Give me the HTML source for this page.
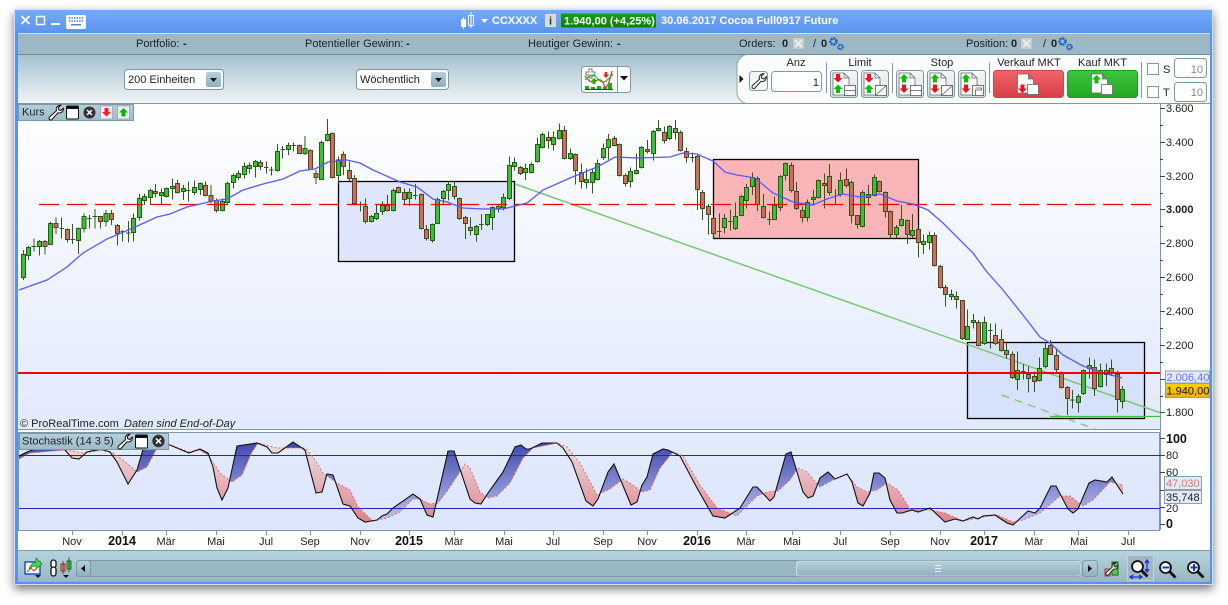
<!DOCTYPE html>
<html><head><meta charset="utf-8"><title>CCXXXX Cocoa</title>
<style>
html,body{margin:0;padding:0;background:#fff;width:1228px;height:605px;overflow:hidden}
#w{position:absolute;left:14px;top:9px;width:1199px;height:576px;box-shadow:0 4px 9px rgba(0,0,0,.55)}
svg{position:absolute;left:0;top:0}
text{font-family:"Liberation Sans",sans-serif;font-size:11px;fill:#222}
.t{font-weight:bold;fill:#fff}
.b{font-weight:bold}
.a{font-size:11px;fill:#222}
.x{font-size:11px;text-anchor:middle;fill:#222}
.xb{font-size:12.500px;font-weight:bold;text-anchor:middle;fill:#111}
.m{text-anchor:middle}
.w{fill:none;stroke:#2c5a12;stroke-width:3}
.g{fill:#3cc03c;stroke:#2c5a12;stroke-width:3}
.r{fill:#dc6464;stroke:#2c5a12;stroke-width:3}
</style></head><body>
<div id="w"></div>
<svg width="1228" height="605" viewBox="0 0 1228 605" xmlns="http://www.w3.org/2000/svg">
<defs>
<linearGradient id="tb" x1="0" y1="0" x2="0" y2="1"><stop offset="0" stop-color="#74abff"/><stop offset="1" stop-color="#5c94ec"/></linearGradient>
<linearGradient id="tool" x1="0" y1="0" x2="0" y2="1"><stop offset="0" stop-color="#a6c2ce"/><stop offset="1" stop-color="#f0f4f6"/></linearGradient>
<linearGradient id="chart" x1="0" y1="0" x2="0" y2="1"><stop offset="0" stop-color="#fff"/><stop offset="1" stop-color="#e1e9fd"/></linearGradient>
<linearGradient id="st" x1="0" y1="0" x2="0" y2="1"><stop offset="0" stop-color="#e3ebfd"/><stop offset="1" stop-color="#dce5fc"/></linearGradient>
<linearGradient id="bot" x1="0" y1="0" x2="0" y2="1"><stop offset="0" stop-color="#b6d4de"/><stop offset="1" stop-color="#98b6c2"/></linearGradient>
<linearGradient id="tag" x1="0" y1="0" x2="0" y2="1"><stop offset="0" stop-color="#b4d0da"/><stop offset="1" stop-color="#9cbcc8"/></linearGradient>
<linearGradient id="btn" x1="0" y1="0" x2="0" y2="1"><stop offset="0" stop-color="#f6f8f9"/><stop offset="1" stop-color="#d6dfe4"/></linearGradient>
<linearGradient id="arr" x1="0" y1="0" x2="0" y2="1"><stop offset="0" stop-color="#b6d0da"/><stop offset="1" stop-color="#90b0be"/></linearGradient>
<linearGradient id="rb" x1="0" y1="0" x2="0" y2="1"><stop offset="0" stop-color="#f06468"/><stop offset="1" stop-color="#d84044"/></linearGradient>
<linearGradient id="gb" x1="0" y1="0" x2="0" y2="1"><stop offset="0" stop-color="#3cc63c"/><stop offset="1" stop-color="#22a622"/></linearGradient>
<linearGradient id="pr" x1="0" y1="0" x2="0" y2="1"><stop offset="0" stop-color="#18a018"/><stop offset="1" stop-color="#0a7e0a"/></linearGradient>
<linearGradient id="yl" x1="0" y1="0" x2="0" y2="1"><stop offset="0" stop-color="#ffd000"/><stop offset="1" stop-color="#f0b000"/></linearGradient>
<linearGradient id="blu" gradientUnits="userSpaceOnUse" x1="0" y1="440" x2="0" y2="526"><stop offset="0" stop-color="#3e44aa"/><stop offset="1" stop-color="#c0ccf4"/></linearGradient>
<linearGradient id="red" gradientUnits="userSpaceOnUse" x1="0" y1="445" x2="0" y2="526"><stop offset="0" stop-color="#ecdde4"/><stop offset="1" stop-color="#de8088"/></linearGradient>
<clipPath id="aboveD"><path d="M19 432V459L30 453 65 450 83 453 103 450 113 453 123 460 137 472 147 467 157 448 170 445 189 452 200 450 208 455 220 473 232 482 242 475 252 452 258 443 277 448 293 448 305 448 313 457 323 473 337 483 350 490 358 507 373 521 387 518 400 512 413 499 420 499 430 504 438 503 448 490 465 464 470 468 480 492 488 498 497 496 510 483 523 458 533 448 557 443 567 447 580 463 597 495 610 489 623 479 633 485 642 492 650 490 660 468 673 452 683 456 700 485 717 508 737 516 757 496 767 492 778 491 790 480 798 468 807 472 820 487 833 480 847 474 857 487 867 492 877 490 887 483 898 490 910 509 930 510 945 513 963 521 983 517 997 515 1013 522 1023 520 1040 513 1060 496 1070 496 1083 506 1093 500 1110 482 1123 485V432Z"/></clipPath>
<clipPath id="aboveK"><path d="M19 432V456L27 452 35 449 45 445 55 445 65 450 72 458 79 459 87 452 100 449 110 452 117 462 128 484 137 470 142 453 143 448 160 443 170 445 177 448 189 453 200 449 208 453 213 467 217 488 222 500 228 488 237 446 257 443 267 447 272 453 278 453 293 442 305 450 310 470 316 493 322 492 327 474 333 475 343 504 350 506 358 518 365 522 377 520 382 516 387 514 393 508 413 494 420 499 427 515 433 517 448 451 454 451 470 499 475 503 481 504 488 493 503 472 515 447 521 445 526 449 530 449 542 443 557 443 563 448 572 462 586 501 593 506 598 499 608 472 614 464 631 505 637 502 642 485 647 477 653 454 663 449 668 450 680 456 697 488 713 516 725 518 740 508 753 487 757 487 770 501 774 497 786 454 791 452 803 492 808 498 813 496 820 478 828 472 835 479 847 474 852 482 858 503 863 506 870 493 874 473 879 473 885 478 890 500 897 513 902 513 912 510 918 512 930 508 945 522 955 519 963 521 973 517 978 519 983 516 995 515 1007 523 1013 525 1028 511 1035 513 1040 508 1051 486 1056 486 1068 509 1073 513 1078 509 1089 483 1095 480 1107 482 1112 477 1117 485 1123 494V432Z"/></clipPath>
<path id="wr" d="M12.500 .8a4 4 0 0 0-4 5.400L1.500 12.500a1.700 1.700 0 0 0 2.500 2.500L10 8.200a4 4 0 0 0 5.300-4.600L13 6 10.800 5.300 10.300 3 12.800 .8z"/>
<path id="au" d="M0 0l4.500 4.500H2v4h-4v-4h-2.500z"/>
<path id="ad" d="M0 8.500l4.500-4.500H2V0h-4v4h-2.500z"/>
<path id="doc" d="M0 0h11l5 5v17H0zM11 0v5h5"/>
<path id="doc2" d="M0 0h11l5 5v14H0zM11 0v5h5"/>
<g id="gear"><circle cx="4.500" cy="4.500" r="3" fill="none" stroke="#1560c8" stroke-width="2.400" stroke-dasharray="2 .7"/><circle cx="11.500" cy="10" r="2.300" fill="none" stroke="#1560c8" stroke-width="2" stroke-dasharray="1.600 .6"/></g>
<g id="off"><rect width="11" height="11" fill="#c8cccc"/><path d="M2 2l7 7M9 2l-7 7" stroke="#eee" stroke-width="2"/></g>
<g id="mag"><circle cx="6.500" cy="6.500" r="5.500" fill="#fff" stroke="#111" stroke-width="1.800"/><path d="M10.500 10.500l6 6" stroke="#111" stroke-width="2.800"/></g>
</defs>

<!-- window frame -->
<rect x="14" y="9" width="1199" height="576" fill="#cfe0f8"/>
<rect x="15" y="10" width="1197" height="574" fill="#5a92ea"/>
<rect x="15" y="10" width="1197" height="23" fill="url(#tb)"/>
<rect x="18" y="33" width="1192" height="549" fill="#fff"/>

<!-- title -->
<path d="M21.500 16l8 8M29.500 16l-8 8" stroke="#fff" stroke-width="1.800"/>
<rect x="36.500" y="16.500" width="8" height="8" fill="none" stroke="#fff" stroke-width="1.400"/>
<rect x="51" y="23" width="9" height="2" fill="#fff"/>
<rect x="66" y="15" width="20" height="14" rx="2" fill="#fff"/>
<path d="M69 18h14M69 21h14" stroke="#4c82dc" stroke-width="1.500" stroke-dasharray="1.500 1"/><rect x="71" y="24" width="10" height="1.500" fill="#4c82dc"/>
<rect x="461" y="19" width="5" height="8" fill="#fff"/><path d="M463.500 17v12M471 12v16" stroke="#fff"/><rect x="468.500" y="15.500" width="5" height="10" fill="none" stroke="#fff"/>
<path d="M481 19h7l-3.500 4z" fill="#fff"/>
<text class="t" x="492" y="24">CCXXXX</text>
<rect x="545" y="14" width="11" height="13" fill="#d8dcdc"/><text x="550.500" y="24.500" class="b m" style="fill:#333">i</text>
<rect x="561" y="13.500" width="95" height="14" fill="url(#pr)"/>
<text class="t" x="564" y="24.500">1.940,00 (+4,25%)</text>
<text class="t" x="661" y="24" style="letter-spacing:.04px">30.06.2017 Cocoa Full0917 Future</text>

<!-- info row -->
<rect x="18" y="33" width="1192" height="22" fill="#9cb8c4"/>
<rect x="18" y="33" width="1192" height="1" fill="#d0e2f2"/>
<rect x="18" y="54" width="1192" height="1" fill="#6f8c9a"/>
<text x="136" y="47">Portfolio:</text><text x="183" y="47" class="b">-</text>
<text x="305" y="47">Potentieller Gewinn:</text><text x="406" y="47" class="b">-</text>
<text x="528" y="47">Heutiger Gewinn:</text><text x="617" y="47" class="b">-</text>
<text x="739" y="47">Orders:</text><text x="782" y="47" class="b">0</text><use href="#off" x="793" y="38"/><text x="813" y="47">/</text><text x="821" y="47" class="b">0</text><use href="#gear" x="829" y="37"/>
<text x="966" y="47">Position:</text><text x="1011" y="47" class="b">0</text><use href="#off" x="1021" y="38"/><text x="1043" y="47">/</text><text x="1051" y="47" class="b">0</text><use href="#gear" x="1058" y="37"/>

<!-- toolbar -->
<rect x="18" y="55" width="1192" height="48" fill="url(#tool)"/>
<path d="M745 55H1210V103H745Q737 100 737 92V66Q737 58 745 55Z" fill="#fbfcfc"/>
<path d="M745 55Q737 58 737 66V92Q737 100 745 103" fill="none" stroke="#8ba4b0"/>
<rect x="18" y="103" width="1192" height="1" fill="#7f98a5"/>
<rect x="124.500" y="69.500" width="99" height="20" rx="3" fill="#fff" stroke="#7f98a5"/>
<text x="128" y="83">200 Einheiten</text>
<rect x="206" y="72" width="15" height="15" rx="2" fill="url(#arr)"/><path d="M210 78h7l-3.500 4z" fill="#111"/>
<rect x="356.500" y="69.500" width="92" height="20" rx="3" fill="#fff" stroke="#7f98a5"/>
<text x="360" y="83">Wöchentlich</text>
<rect x="431" y="72" width="15" height="15" rx="2" fill="url(#arr)"/><path d="M435 78h7l-3.500 4z" fill="#111"/>
<rect x="581.500" y="66.500" width="49" height="26" rx="3" fill="#fff" stroke="#7f98a5"/>
<line x1="617.500" y1="67" x2="617.500" y2="92" stroke="#7f98a5"/>
<path d="M620 76h8l-4 4.500z" fill="#111"/>
<path d="M589 69h3v3h3v3h-3v3h-3v-3h-3v-3h3z" fill="#fff" stroke="#777"/>
<path d="M585 76q6 9 11 5t8 4 8-14" fill="none" stroke="#dd3030" stroke-width="1.200"/>
<path d="M585 80q7-8 12-2t9 3 7-7" fill="none" stroke="#28b028" stroke-width="1.200"/>
<path d="M585 86h4v3h-4zM591 87h4v2h-4zM597 86h4v3h-4zM603 87h4v2h-4zM608 83h4v6h-4z" fill="#18b018"/>
<use href="#au" transform="translate(594 78) scale(.7)" fill="#0b0"/><use href="#ad" transform="translate(606 72) scale(.7)" fill="#e22"/>
<rect x="585" y="89" width="28" height="1" fill="#2233aa"/>

<!-- order panel -->
<path d="M739.500 75l4 4-4 4z" fill="#111"/>
<rect x="749.500" y="71.500" width="18" height="19" rx="3" fill="#f4f6f7" stroke="#7f98a5"/>
<use href="#wr" x="751" y="73" fill="#fff" stroke="#222"/>
<text class="m" x="796" y="66">Anz</text>
<rect x="771.500" y="71.500" width="50" height="20" rx="3" fill="#fff" stroke="#7f98a5"/>
<text x="819" y="86" style="text-anchor:end">1</text>
<path d="M826.500 63v30M892.500 63v30M989.500 63v30M1141.500 62v36" stroke="#7f98a5"/>
<text class="m" x="860" y="66">Limit</text>
<g stroke="#7f98a5">
<rect x="830.500" y="70.500" width="27" height="27" rx="3" fill="url(#btn)"/>
<rect x="861.500" y="70.500" width="27" height="27" rx="3" fill="url(#btn)"/>
<rect x="896.500" y="70.500" width="27" height="27" rx="3" fill="url(#btn)"/>
<rect x="927.500" y="70.500" width="27" height="27" rx="3" fill="url(#btn)"/>
<rect x="958.500" y="70.500" width="27" height="27" rx="3" fill="url(#btn)"/>
</g>
<g stroke="#666" stroke-width=".8" fill="#fff">
<use href="#doc" x="833" y="73"/><use href="#doc" x="864" y="73"/><use href="#doc" x="899" y="73"/><use href="#doc" x="930" y="73"/><use href="#doc" x="961" y="73"/>
<rect x="844.500" y="85.500" width="11" height="10" stroke="#555"/><rect x="875.500" y="85.500" width="11" height="10" stroke="#555"/><rect x="910.500" y="85.500" width="11" height="10" stroke="#555"/><rect x="941.500" y="85.500" width="11" height="10" stroke="#555"/><rect x="972.500" y="85.500" width="11" height="10" stroke="#555"/>
<path d="M844.500 90.500h11M910.500 90.500h11M875.500 95.500l11-10M941.500 95.500l11-10M975.500 95v-5h6v-2h-6" fill="none" stroke="#555"/>
</g>
<g fill="#e8141c"><use href="#ad" x="838" y="74"/><use href="#ad" x="869" y="74"/><use href="#ad" x="904" y="84.500"/><use href="#ad" x="935" y="84.500"/><use href="#ad" x="966" y="84.500"/></g>
<g fill="#08c008"><use href="#au" x="838" y="84.500"/><use href="#au" x="869" y="84.500"/><use href="#au" x="904" y="74"/><use href="#au" x="935" y="74"/><use href="#au" x="966" y="74"/></g>
<text class="m" x="942" y="66">Stop</text>
<text class="m" x="1029" y="66">Verkauf MKT</text>
<text class="m" x="1102.500" y="66">Kauf MKT</text>
<rect x="993.500" y="70.500" width="70" height="27" rx="3" fill="url(#rb)" stroke="#c84a4a"/>
<rect x="1067.500" y="70.500" width="70" height="27" rx="3" fill="url(#gb)" stroke="#1f9a24"/>
<g fill="#fff" stroke="#667" stroke-width=".8"><use href="#doc2" x="1017.500" y="74"/><rect x="1027.500" y="84.500" width="11" height="10"/><use href="#doc2" x="1091.500" y="74"/><rect x="1101.500" y="84.500" width="11" height="10"/></g>
<use href="#ad" x="1022.500" y="84.500" fill="#e8141c"/><use href="#au" x="1096.500" y="75" fill="#08c008"/>
<g fill="#fff" stroke="#7f98a5">
<rect x="1147.500" y="63.500" width="11" height="11"/><rect x="1147.500" y="86.500" width="11" height="11"/>
<rect x="1174.500" y="58.500" width="32" height="19" rx="3"/><rect x="1174.500" y="82.500" width="32" height="19" rx="3"/>
</g>
<text x="1163" y="73">S</text><text x="1163" y="96">T</text>
<text x="1203" y="73" style="text-anchor:end;fill:#888">10</text><text x="1203" y="96" style="text-anchor:end;fill:#888">10</text>

<!-- main chart -->
<rect x="18" y="104" width="1142" height="326" fill="url(#chart)"/>
<rect x="338.500" y="181.500" width="176" height="80" fill="#dfe6fb" stroke="#000" stroke-width="1.300"/>
<rect x="713.500" y="159.500" width="205" height="79" fill="#fbb4b8" stroke="#000" stroke-width="1.300"/>
<rect x="967.500" y="342.500" width="177" height="76" fill="#d6e1fb" stroke="#000" stroke-width="1.300"/>
<path d="M515 184L1160 412.700" stroke="#78c878" stroke-width="1.500" fill="none"/>
<path d="M1001.700 395L1095 429" stroke="#78c878" stroke-width="1.300" stroke-dasharray="8 6" fill="none"/>
<path d="M1050 416.500H1160" stroke="#40bc40" stroke-width="1.200" fill="none"/>

<g shape-rendering="crispEdges">
<g transform="translate(0 110) scale(.33333)">
<path class="w" d="M70 420V510M85 408V450M102 385V425M95 410h14M118 390V437M135 390V433M151 335V405M168 322V372M185 322V385M178 355h14M202 355V398M218 342V402M211 389h14M235 352V432M252 310V368M268 315V355M261 325h14M285 297V355M278 319h14M301 318V355M318 300V350M334 300V345M352 342V407M368 360V395M361 365h14M385 333V398M378 369h14M400 310V395M418 252V332M433 250V285M451 235V285M466 222V262M484 235V285M499 232V262M517 205V268M532 210V250M550 225V270M565 215V275M558 241h14M583 212V255M601 218V255M616 214V260M633 225V280M649 265V308M667 265V305M682 215V285M700 190V235M715 182V210M733 157V205M748 158V190M766 150V203M781 150V180M799 155V190M792 173h14M814 170V197M807 180h14M832 102V185M848 108V145M841 119h14M865 98V135M881 98V125M874 106h14M898 104V132M915 78V135M931 118V180M948 180V222M964 92V210M982 27V95M997 68V205M1015 140V220M1030 125V195M1048 155V215M1063 195V282M1081 275V305M1074 283h14M1096 265V340M1114 315V337M1129 285V330M1147 275V315M1162 255V305M1180 235V305M1195 230V250M1213 235V285M1228 235V288"/>
<path class="g" d="M64 433h12v70h-12zM79 412h12v25h-12zM112 394h12v15h-12zM145 340h12v63h-12zM229 355h12v36h-12zM246 319h12v36h-12zM312 310h12v24h-12zM394 325h12v42h-12zM412 265h12v57h-12zM427 260h12v11h-12zM445 241h12v21h-12zM478 247h12v9h-12zM493 235h12v24h-12zM511 230h12v5h-12zM544 235h12v10h-12zM577 232h12v15h-12zM595 220h12v18h-12zM661 275h12v26h-12zM676 220h12v57h-12zM694 196h12v21h-12zM709 190h12v13h-12zM727 169h12v24h-12zM742 166h12v9h-12zM760 154h12v15h-12zM826 124h12v57h-12zM859 106h12v12h-12zM909 115h12v15h-12zM958 97h12v111h-12zM976 73h12v18h-12zM1009 150h12v47h-12zM1108 320h12v14h-12zM1123 311h12v14h-12zM1141 286h12v18h-12zM1174 241h12v61h-12zM1222 247h12v18h-12z"/>
<path class="r" d="M129 394h12v15h-12zM162 340h12v12h-12zM196 358h12v30h-12zM295 320h12v14h-12zM328 310h12v18h-12zM346 346h12v24h-12zM460 245h12v5h-12zM526 220h12v27h-12zM610 226h12v31h-12zM627 256h12v17h-12zM643 272h12v29h-12zM775 157h12v12h-12zM892 106h12v24h-12zM925 122h12v56h-12zM942 191h12v11h-12zM991 70h12v132h-12zM1024 133h12v36h-12zM1042 181h12v24h-12zM1057 205h12v76h-12zM1090 289h12v45h-12zM1156 286h12v16h-12zM1189 232h12v15h-12zM1207 247h12v21h-12z"/>
</g>
<g transform="translate(320 110) scale(.33333)">
<path class="w" d="M286 222V268M279 256h14M304 250V358M319 345V392M337 340V398M352 262V342M370 240V285M385 215V272M403 215V268M418 262V330M436 318V387M451 322V377M469 345V395M484 312V360M477 344h14M502 312V348M517 290V360M535 282V308M550 250V302M568 140V270M583 142V182M601 168V195M616 160V210M634 157V190M652 83V158M667 68V115M685 65V115M700 65V122M718 40V88M733 48V148M751 115V150M766 130V223M784 160V235M799 175V235M817 178V250M832 148V212M850 100V150M865 72V148M883 78V110M898 100V200M916 190V230M931 172V232M949 130V193M964 108V175M982 90V130M1000 60V152M1015 30V65M1033 50V100M1048 45V90M1066 30V88M1081 62V125"/>
<path class="g" d="M331 343h12v49h-12zM346 268h12v72h-12zM364 244h12v22h-12zM379 223h12v18h-12zM463 349h12v24h-12zM496 313h12v31h-12zM511 292h12v30h-12zM529 289h12v7h-12zM544 262h12v30h-12zM562 166h12v100h-12zM577 157h12v12h-12zM610 175h12v12h-12zM628 163h12v24h-12zM646 103h12v52h-12zM661 73h12v39h-12zM694 82h12v21h-12zM712 61h12v24h-12zM745 130h12v15h-12zM793 208h12v9h-12zM811 187h12v30h-12zM826 160h12v48h-12zM844 115h12v27h-12zM859 88h12v24h-12zM925 184h12v30h-12zM943 181h12v9h-12zM958 112h12v60h-12zM994 64h12v66h-12zM1042 49h12v36h-12z"/>
<path class="r" d="M298 253h12v102h-12zM313 358h12v28h-12zM397 229h12v31h-12zM412 265h12v60h-12zM430 322h12v19h-12zM445 352h12v9h-12zM595 172h12v18h-12zM679 82h12v9h-12zM727 61h12v84h-12zM760 133h12v48h-12zM778 187h12v27h-12zM877 85h12v21h-12zM892 103h12v93h-12zM910 196h12v24h-12zM976 118h12v6h-12zM1009 55h12v6h-12zM1027 67h12v24h-12zM1060 55h12v12h-12zM1075 67h12v54h-12z"/>
</g>
<g transform="translate(680 140) scale(.33333)">
<path class="w" d="M19 22V67M37 37V67M30 52h14M52 45V210M67 150V240M85 192V283M100 232V295M118 220V295M111 275h14M133 222V280M151 208V272M144 245h14M166 187V270M184 165V228M199 132V205M217 97V165M232 110V213M250 162V235M268 215V255M261 239h14M283 170V240M301 105V213M316 67V122M334 67V158M349 126V210M367 200V248M382 178V245M400 150V195M415 118V175M433 100V205M448 72V167M466 147V192M481 98V170M499 85V142M514 122V250M532 225V265M547 152V262M565 135V197M583 103V170M598 122V157M616 155V232M631 212V295M649 255V295M664 195V260M682 238V312M697 222V295M715 265V353M730 283V342M748 275V328M763 278V380"/>
<path class="g" d="M127 235h12v27h-12zM160 229h12v36h-12zM178 169h12v57h-12zM193 142h12v39h-12zM211 112h12v27h-12zM277 196h12v42h-12zM295 109h12v93h-12zM310 70h12v36h-12zM376 187h12v45h-12zM394 172h12v6h-12zM409 121h12v51h-12zM475 121h12v42h-12zM541 157h12v102h-12zM559 163h12v9h-12zM577 112h12v54h-12zM643 262h12v21h-12zM658 238h12v18h-12zM691 271h12v15h-12zM724 304h12v9h-12zM742 286h12v21h-12z"/>
<path class="r" d="M13 35h12v17h-12zM46 49h12v99h-12zM61 157h12v48h-12zM79 199h12v24h-12zM94 235h12v46h-12zM226 115h12v78h-12zM244 199h12v33h-12zM328 76h12v75h-12zM343 154h12v51h-12zM361 211h12v21h-12zM427 130h12v6h-12zM442 109h12v48h-12zM493 118h12v18h-12zM508 127h12v99h-12zM526 226h12v27h-12zM592 124h12v30h-12zM610 157h12v57h-12zM625 214h12v69h-12zM676 241h12v42h-12zM709 268h12v39h-12zM757 286h12v90h-12z"/>
</g>
<g transform="translate(920 220) scale(.33333)">
<path class="w" d="M61 135V205M76 195V260M94 208V240M109 215V265M127 240V360M142 268V360M160 282V325M175 300V380M193 290V375M211 310V385M204 331h14M226 310V375M244 328V395M259 365V415M277 395V477M292 395V510M310 432V478M303 455h14M325 440V518M343 455V516M358 412V485M376 368V445M391 360V405M409 388V458M424 455V505M442 498V585M457 510V565M450 540h14M475 522V578M490 448V525M508 412V475M523 418V528M541 430V502M559 430V498M574 418V468M592 452V578M607 498V566"/>
<path class="g" d="M136 319h12v39h-12zM187 307h12v63h-12zM286 451h12v27h-12zM352 445h12v36h-12zM370 385h12v54h-12zM469 529h12v18h-12zM484 451h12v69h-12zM502 436h12v9h-12zM535 451h12v48h-12zM553 451h12v12h-12zM601 508h12v36h-12z"/>
<path class="r" d="M55 139h12v63h-12zM70 202h12v21h-12zM88 223h12v6h-12zM103 229h12v9h-12zM121 241h12v114h-12zM154 301h12v6h-12zM169 307h12v69h-12zM220 346h12v24h-12zM238 358h12v33h-12zM253 391h12v12h-12zM271 403h12v69h-12zM319 463h12v12h-12zM337 469h12v15h-12zM385 376h12v27h-12zM403 406h12v42h-12zM418 460h12v42h-12zM436 502h12v33h-12zM517 442h12v63h-12zM568 445h12v15h-12zM586 463h12v75h-12z"/>
</g>
</g>

<path d="M39 204.500H1152" stroke="#f00000" stroke-width="1.300" stroke-dasharray="20 8" fill="none"/>
<path d="M19 290L47 280 67 267 83 253 107 239 133 228 157 217 170 214 187 207 213 201 227 199 243 190 263 184 283 179 300 171 315 169 328 162 347 160 360 163 373 170 400 182 417 187 433 199 447 202 463 208 483 209 503 209 527 203 537 195 543 190 570 178 597 167 615 157 637 158 670 157 683 153 697 154 713 161 725 172 737 175 755 178 773 193 793 202 813 205 827 199 843 194 860 197 880 194 897 201 913 204 928 210 943 223 957 237 973 253 987 272 1003 290 1023 315 1040 337 1050 343 1063 355 1083 366 1100 372 1122 378" fill="none" stroke="#5858ff" stroke-width="1.300"/>
<rect x="18" y="372" width="1142" height="2" fill="#f00000"/>
<text x="20" y="427" style="font-size:11px;fill:#222">© ProRealTime.com</text>
<text x="124" y="427" style="font-size:11px;font-style:italic;fill:#222">Daten sind End-of-Day</text>

<!-- price axis -->
<rect x="1160" y="104" width="50" height="427" fill="#fff"/>
<line x1="1160.500" y1="104" x2="1160.500" y2="530" stroke="#7f98a5"/>
<path d="M1160 108.500h5M1160 142.500h5M1160 176.500h5M1160 209.500h5M1160 243.500h5M1160 277.500h5M1160 311.500h5M1160 345.500h5M1160 379.500h5M1160 412.500h5M1160 125.500h3M1160 159.500h3M1160 193.500h3M1160 226.500h3M1160 260.500h3M1160 294.500h3M1160 328.500h3M1160 362.500h3M1160 396.500h3" stroke="#444"/>
<text class="a" x="1166" y="112">3.600</text>
<text class="a" x="1166" y="146">3.400</text>
<text class="a" x="1166" y="180">3.200</text>
<text class="a" x="1166" y="213" style="font-weight:bold">3.000</text>
<text class="a" x="1166" y="247">2.800</text>
<text class="a" x="1166" y="281">2.600</text>
<text class="a" x="1166" y="315">2.400</text>
<text class="a" x="1166" y="349">2.200</text>
<text class="a" x="1166" y="416">1.800</text>
<rect x="1165.500" y="371" width="44" height="12" fill="#e3ebfb" stroke="#8aa2ae"/>
<text x="1166.500" y="381" style="font-size:11px;fill:#6a6aff">2.006,40</text>
<rect x="1165.500" y="383.500" width="44" height="14" fill="url(#yl)" stroke="#8aa2ae"/>
<text x="1166.500" y="394.500" style="font-size:11px;fill:#111">1.940,00</text>

<!-- separator -->
<rect x="18" y="429" width="1142" height="1" fill="#7f98a5"/>
<rect x="18" y="430" width="1142" height="2" fill="#fff"/>

<!-- stochastic -->
<rect x="18.500" y="432.500" width="1141" height="98" fill="url(#st)" stroke="#7f98a5"/>
<path clip-path="url(#aboveD)" fill="url(#blu)" d="M19 531V456L27 452 35 449 45 445 55 445 65 450 72 458 79 459 87 452 100 449 110 452 117 462 128 484 137 470 142 453 143 448 160 443 170 445 177 448 189 453 200 449 208 453 213 467 217 488 222 500 228 488 237 446 257 443 267 447 272 453 278 453 293 442 305 450 310 470 316 493 322 492 327 474 333 475 343 504 350 506 358 518 365 522 377 520 382 516 387 514 393 508 413 494 420 499 427 515 433 517 448 451 454 451 470 499 475 503 481 504 488 493 503 472 515 447 521 445 526 449 530 449 542 443 557 443 563 448 572 462 586 501 593 506 598 499 608 472 614 464 631 505 637 502 642 485 647 477 653 454 663 449 668 450 680 456 697 488 713 516 725 518 740 508 753 487 757 487 770 501 774 497 786 454 791 452 803 492 808 498 813 496 820 478 828 472 835 479 847 474 852 482 858 503 863 506 870 493 874 473 879 473 885 478 890 500 897 513 902 513 912 510 918 512 930 508 945 522 955 519 963 521 973 517 978 519 983 516 995 515 1007 523 1013 525 1028 511 1035 513 1040 508 1051 486 1056 486 1068 509 1073 513 1078 509 1089 483 1095 480 1107 482 1112 477 1117 485 1123 494V531Z"/>
<path clip-path="url(#aboveK)" fill="url(#red)" d="M19 531V459L30 453 65 450 83 453 103 450 113 453 123 460 137 472 147 467 157 448 170 445 189 452 200 450 208 455 220 473 232 482 242 475 252 452 258 443 277 448 293 448 305 448 313 457 323 473 337 483 350 490 358 507 373 521 387 518 400 512 413 499 420 499 430 504 438 503 448 490 465 464 470 468 480 492 488 498 497 496 510 483 523 458 533 448 557 443 567 447 580 463 597 495 610 489 623 479 633 485 642 492 650 490 660 468 673 452 683 456 700 485 717 508 737 516 757 496 767 492 778 491 790 480 798 468 807 472 820 487 833 480 847 474 857 487 867 492 877 490 887 483 898 490 910 509 930 510 945 513 963 521 983 517 997 515 1013 522 1023 520 1040 513 1060 496 1070 496 1083 506 1093 500 1110 482 1123 485V531Z"/>
<path d="M19 455.500H1160M19 508.500H1160" stroke="#2222cc" stroke-width="1.100" fill="none"/>
<path d="M19 459L30 453 65 450 83 453 103 450 113 453 123 460 137 472 147 467 157 448 170 445 189 452 200 450 208 455 220 473 232 482 242 475 252 452 258 443 277 448 293 448 305 448 313 457 323 473 337 483 350 490 358 507 373 521 387 518 400 512 413 499 420 499 430 504 438 503 448 490 465 464 470 468 480 492 488 498 497 496 510 483 523 458 533 448 557 443 567 447 580 463 597 495 610 489 623 479 633 485 642 492 650 490 660 468 673 452 683 456 700 485 717 508 737 516 757 496 767 492 778 491 790 480 798 468 807 472 820 487 833 480 847 474 857 487 867 492 877 490 887 483 898 490 910 509 930 510 945 513 963 521 983 517 997 515 1013 522 1023 520 1040 513 1060 496 1070 496 1083 506 1093 500 1110 482 1123 485" fill="none" stroke="#e86868" stroke-width="1" stroke-dasharray="2 2"/>
<path d="M19 456L27 452 35 449 45 445 55 445 65 450 72 458 79 459 87 452 100 449 110 452 117 462 128 484 137 470 142 453 143 448 160 443 170 445 177 448 189 453 200 449 208 453 213 467 217 488 222 500 228 488 237 446 257 443 267 447 272 453 278 453 293 442 305 450 310 470 316 493 322 492 327 474 333 475 343 504 350 506 358 518 365 522 377 520 382 516 387 514 393 508 413 494 420 499 427 515 433 517 448 451 454 451 470 499 475 503 481 504 488 493 503 472 515 447 521 445 526 449 530 449 542 443 557 443 563 448 572 462 586 501 593 506 598 499 608 472 614 464 631 505 637 502 642 485 647 477 653 454 663 449 668 450 680 456 697 488 713 516 725 518 740 508 753 487 757 487 770 501 774 497 786 454 791 452 803 492 808 498 813 496 820 478 828 472 835 479 847 474 852 482 858 503 863 506 870 493 874 473 879 473 885 478 890 500 897 513 902 513 912 510 918 512 930 508 945 522 955 519 963 521 973 517 978 519 983 516 995 515 1007 523 1013 525 1028 511 1035 513 1040 508 1051 486 1056 486 1068 509 1073 513 1078 509 1089 483 1095 480 1107 482 1112 477 1117 485 1123 494" fill="none" stroke="#111" stroke-width="1.100"/>
<path d="M1160 438.500h5M1160 455.500h5M1160 472.500h5M1160 490.500h5M1160 507.500h5M1160 524.500h5" stroke="#444"/>
<text x="1166" y="443" style="font-size:12.500px;font-weight:bold;fill:#111">100</text>
<text class="a" x="1166" y="459">80</text>
<text class="a" x="1166" y="476">60</text>
<text class="a" x="1166" y="512">20</text>
<text x="1166" y="528" style="font-size:12.500px;font-weight:bold;fill:#111">0</text>
<rect x="1164.500" y="476.500" width="37" height="13" fill="#e3ebfb" stroke="#8aa2ae"/>
<text x="1166" y="487" style="font-size:11px;fill:#e87070">47,030</text>
<rect x="1164.500" y="490.500" width="37" height="13" fill="#e3ebfb" stroke="#8aa2ae"/>
<text x="1166" y="501" style="font-size:11px;fill:#222">35,748</text>

<!-- x axis -->
<path d="M72.500 531v4M122.500 531v4M166.500 531v4M216.500 531v4M266.500 531v4M310.500 531v4M360.500 531v4M409.500 531v4M454.500 531v4M504.500 531v4M553.500 531v4M603.500 531v4M647.500 531v4M697.500 531v4M746.500 531v4M792.500 531v4M840.500 531v4M890.500 531v4M940.500 531v4M984.500 531v4M1034.500 531v4M1078.500 531v4M1128.500 531v4" stroke="#7f98a5"/>
<text class="x" x="72" y="545">Nov</text><text class="xb" x="122" y="545">2014</text><text class="x" x="166" y="545">Mär</text><text class="x" x="216" y="545">Mai</text><text class="x" x="266" y="545">Jul</text><text class="x" x="310" y="545">Sep</text><text class="x" x="360" y="545">Nov</text><text class="xb" x="409" y="545">2015</text><text class="x" x="454" y="545">Mär</text><text class="x" x="504" y="545">Mai</text><text class="x" x="553" y="545">Jul</text><text class="x" x="603" y="545">Sep</text><text class="x" x="647" y="545">Nov</text><text class="xb" x="697" y="545">2016</text><text class="x" x="746" y="545">Mär</text><text class="x" x="792" y="545">Mai</text><text class="x" x="840" y="545">Jul</text><text class="x" x="890" y="545">Sep</text><text class="x" x="940" y="545">Nov</text><text class="xb" x="984" y="545">2017</text><text class="x" x="1034" y="545">Mär</text><text class="x" x="1079" y="545">Mai</text><text class="x" x="1128" y="545">Jul</text>

<!-- bottom toolbar -->
<rect x="18" y="551" width="1192" height="31" fill="url(#bot)"/>
<rect x="18" y="550" width="1192" height="1" fill="#7f98a5"/>
<rect x="25" y="562" width="15" height="12" fill="#fff" stroke="#2050c0" stroke-width="1.500"/>
<path d="M27 572l4-4 3 3 4-4" fill="none" stroke="#d33"/>
<path d="M29 569q2-6 7-7v-4l6 6-6 5v-3q-4 0-7 3z" fill="#4ad04a" stroke="#1a8a1a" stroke-width=".7"/>
<path d="M35 575h6l-3 3z" fill="#111"/>
<rect x="51" y="560" width="5" height="8" rx="2.500" fill="#fff" stroke="#111" stroke-width="1.300"/><rect x="51" y="567" width="5" height="9" rx="2.500" fill="#fff" stroke="#111" stroke-width="1.300"/>
<rect x="61" y="564" width="4" height="7" fill="#e88" stroke="#933"/><rect x="67" y="561" width="4" height="8" fill="#4c4" stroke="#272"/>
<path d="M63 561v13M69 557v15" stroke="#333" stroke-width=".8"/><path d="M63 575h6l-3 3z" fill="#111"/>
<rect x="76.500" y="560.500" width="1004" height="16" rx="3" fill="#9ab8c4" stroke="#7f98a5"/>
<rect x="76.500" y="560.500" width="14" height="16" rx="3" fill="url(#arr)" stroke="#7f98a5"/>
<path d="M85 565v7l-4-3.500z" fill="#111"/>
<rect x="796.500" y="561" width="284" height="15" rx="3" fill="url(#arr)" stroke="#e8f0f4" stroke-width=".6"/>
<path d="M935 565.500h6M935 568.500h6M935 571.500h6" stroke="#eef" stroke-width="1"/>
<rect x="1082.500" y="560.500" width="15" height="16" rx="3" fill="url(#arr)" stroke="#7f98a5"/>
<path d="M1088 565v7l4-3.500z" fill="#111"/>
<rect x="1105" y="569" width="5" height="7" fill="#d88" stroke="#844"/><rect x="1112" y="562" width="6" height="13" fill="#48d048" stroke="#262"/>
<use href="#wr" transform="translate(1105 562) scale(.85)" fill="#fff" stroke="#111"/>
<rect x="1127.500" y="555.500" width="26" height="25" fill="#a4b6bf" stroke="#c2d2d8"/>
<use href="#mag" x="1131" y="560"/><path d="M1147 561v10M1145 563l2-3 2 3M1145 569l2 3 2-3M1131 577h10M1133 575l-3 2 3 2M1139 575l3 2-3 2" stroke="#1030e0" fill="none" stroke-width="1.200"/>
<use href="#mag" x="1159" y="561"/><path d="M1162.500 567.500h7" stroke="#1030e0" stroke-width="2"/>
<use href="#mag" x="1187" y="561"/><path d="M1190.500 567.500h7M1194 564v7" stroke="#1030e0" stroke-width="2"/>

<!-- tags -->
<rect x="18.500" y="104.500" width="115" height="16" fill="url(#tag)" stroke="#7f98a5"/>
<text x="22" y="115.500">Kurs</text>
<use href="#wr" x="48" y="104.500" fill="#fff" stroke="#111"/>
<rect x="66.500" y="106" width="12" height="13" rx="1" fill="#fff" stroke="#111"/><rect x="66.500" y="106" width="12" height="3" fill="#111"/>
<circle cx="89.500" cy="112.500" r="6" fill="#333"/><path d="M87 110l5 5M92 110l-5 5" stroke="#fff" stroke-width="1.500"/>
<rect x="100.500" y="106" width="12" height="13" fill="#eef" stroke="#aab"/><use href="#ad" transform="translate(106.500 108) scale(1)" fill="#e22"/>
<rect x="117.500" y="106" width="12" height="13" fill="#eef" stroke="#aab"/><use href="#au" transform="translate(123.500 108) scale(1)" fill="#0b0"/>
<rect x="19.500" y="433.500" width="149" height="16" fill="url(#tag)" stroke="#7f98a5"/>
<text x="22" y="444.500" style="font-size:11px">Stochastik (14 3 5)</text>
<use href="#wr" x="117" y="433.500" fill="#fff" stroke="#111"/>
<rect x="135.500" y="435" width="12" height="13" rx="1" fill="#fff" stroke="#111"/><rect x="135.500" y="435" width="12" height="3" fill="#111"/>
<circle cx="158.500" cy="441" r="6.200" fill="#333"/><path d="M156 438.500l5 5M161 438.500l-5 5" stroke="#fff" stroke-width="1.500"/>
</svg>
</body></html>
